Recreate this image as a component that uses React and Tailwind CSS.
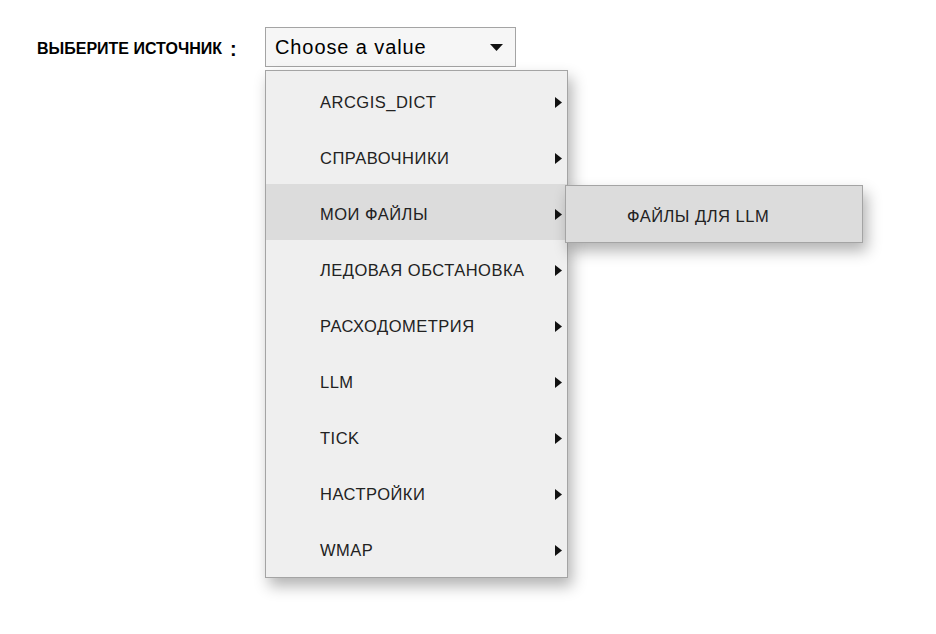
import React from 'react'

const items = [
  'ARCGIS_DICT',
  'СПРАВОЧНИКИ',
  'МОИ ФАЙЛЫ',
  'ЛЕДОВАЯ ОБСТАНОВКА',
  'РАСХОДОМЕТРИЯ',
  'LLM',
  'TICK',
  'НАСТРОЙКИ',
  'WMAP',
]

const Arrow = () => (
  <svg width="7" height="11" viewBox="0 0 7 11" className="block">
    <path d="M0 0 L7 5.5 L0 11 Z" fill="#111" />
  </svg>
)

export default function App() {
  return (
    <div className="min-h-[634px] w-[936px] bg-white font-['Liberation_Sans',Arial,sans-serif] text-[#222]">
      <div className="flex items-start pl-[37px] pt-[27px]">
        <div className="flex h-[40px] w-[228px] items-center gap-[8px] pt-[4px] text-[16px] font-bold text-black">
          <span>ВЫБЕРИТЕ ИСТОЧНИК</span>
          <span className="text-[20px]">:</span>
        </div>
        <div className="relative">
          <div className="flex h-[40px] w-[251px] items-center justify-between border border-[#a4a4a4] bg-[#f6f6f6] pl-[9px] pr-[12px] text-[20px] tracking-[0.9px] text-black">
            <span>Choose a value</span>
            <svg width="13" height="7" viewBox="0 0 13 7">
              <path d="M0 0 L13 0 L6.5 7 Z" fill="#111" />
            </svg>
          </div>
          <div className="absolute left-0 top-[43px] w-[303px] border border-[#a4a4a4] bg-[#efefef] py-px shadow-[4px_8px_14px_rgba(0,0,0,0.3)]">
            {items.map((it) => (
              <div
                key={it}
                className={`relative flex h-[56px] items-center justify-between pl-[54px] pr-[5px] pt-[4px] text-[16.5px] tracking-[0.5px] ${
                  it === 'МОИ ФАЙЛЫ' ? 'bg-[#dcdcdc]' : ''
                }`}
              >
                <span>{it}</span>
                <Arrow />
                {it === 'МОИ ФАЙЛЫ' && (
                  <div className="absolute left-[299px] top-px flex h-[58px] w-[298px] items-center border border-[#a4a4a4] bg-[#dcdcdc] pl-[61px] pt-[4px] shadow-[4px_8px_14px_rgba(0,0,0,0.3)]">
                    ФАЙЛЫ ДЛЯ LLM
                  </div>
                )}
              </div>
            ))}
          </div>
        </div>
      </div>
    </div>
  )
}
